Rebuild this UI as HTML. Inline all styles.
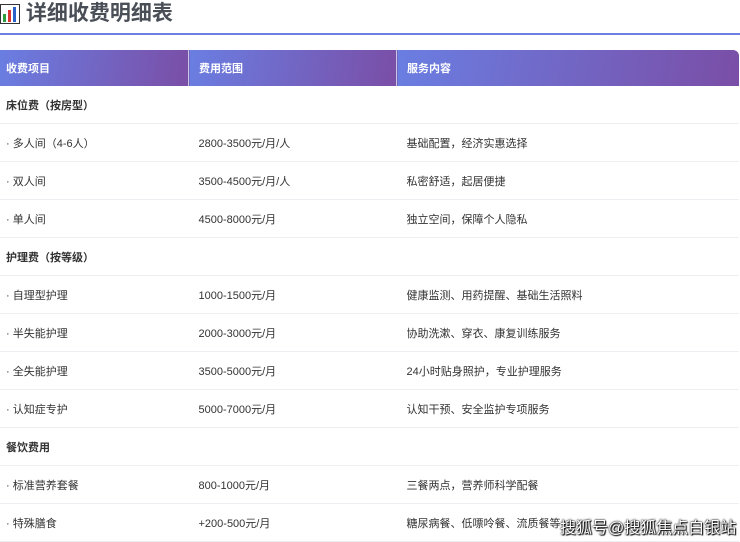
<!DOCTYPE html>
<html><head><meta charset="utf-8"><style>
body{margin:0;width:740px;height:542px;overflow:hidden;background:#fff;font-family:"Liberation Sans","Noto Sans CJK SC",sans-serif;position:relative}
h1{position:absolute;left:0;top:1px;margin:0;font-size:21px;font-weight:bold;color:#4a4f57;line-height:26px;display:flex;align-items:center}
.line{position:absolute;left:0;top:33px;width:740px;height:2px;background:#6b80e2}
table{position:absolute;left:0;top:50px;width:739px;border-collapse:collapse;font-size:11px;color:#333}
th{height:36px;text-align:left;padding:0 0 0 6px;color:#fff;font-weight:bold;background:linear-gradient(100deg,#6a7ee2,#7a4ea6)}
th.c3{border-top-right-radius:6px}
th+th{border-left:1px solid #c9c5e6;padding-left:10px}
td{height:37px;border-bottom:1px solid #eceef2;padding:0 0 0 6px}
td+td{padding-left:10px}
td.cat{font-weight:bold;color:#333}
.wm{position:absolute;left:560px;top:514px;font-size:16px;white-space:nowrap;color:#fff;text-shadow:0 0 2px #000,0 0 1px #000,1px 1px 1px #000}
</style></head><body>
<h1><svg width="20" height="20" viewBox="0 0 20 20"><rect x="0.5" y="0.5" width="19" height="19" fill="#fff" stroke="#333"/><rect x="3" y="10" width="3" height="8" fill="#2e9e3e"/><rect x="8" y="6" width="3" height="12" fill="#d33"/><rect x="13" y="3" width="3" height="15" fill="#2a62c9"/></svg>&nbsp;详细收费明细表</h1>
<div class="line"></div>
<table>
<tr><th style="width:182px">收费项目</th><th style="width:197px">费用范围</th><th class="c3">服务内容</th></tr>
<tr><td class="cat" colspan="3">床位费（按房型）</td></tr>
<tr><td>· 多人间（4-6人）</td><td>2800-3500元/月/人</td><td>基础配置，经济实惠选择</td></tr>
<tr><td>· 双人间</td><td>3500-4500元/月/人</td><td>私密舒适，起居便捷</td></tr>
<tr><td>· 单人间</td><td>4500-8000元/月</td><td>独立空间，保障个人隐私</td></tr>
<tr><td class="cat" colspan="3">护理费（按等级）</td></tr>
<tr><td>· 自理型护理</td><td>1000-1500元/月</td><td>健康监测、用药提醒、基础生活照料</td></tr>
<tr><td>· 半失能护理</td><td>2000-3000元/月</td><td>协助洗漱、穿衣、康复训练服务</td></tr>
<tr><td>· 全失能护理</td><td>3500-5000元/月</td><td>24小时贴身照护，专业护理服务</td></tr>
<tr><td>· 认知症专护</td><td>5000-7000元/月</td><td>认知干预、安全监护专项服务</td></tr>
<tr><td class="cat" colspan="3">餐饮费用</td></tr>
<tr><td>· 标准营养套餐</td><td>800-1000元/月</td><td>三餐两点，营养师科学配餐</td></tr>
<tr><td>· 特殊膳食</td><td>+200-500元/月</td><td>糖尿病餐、低嘌呤餐、流质餐等</td></tr>
</table>
<div class="wm">搜狐号@搜狐焦点白银站</div>
</body></html>
